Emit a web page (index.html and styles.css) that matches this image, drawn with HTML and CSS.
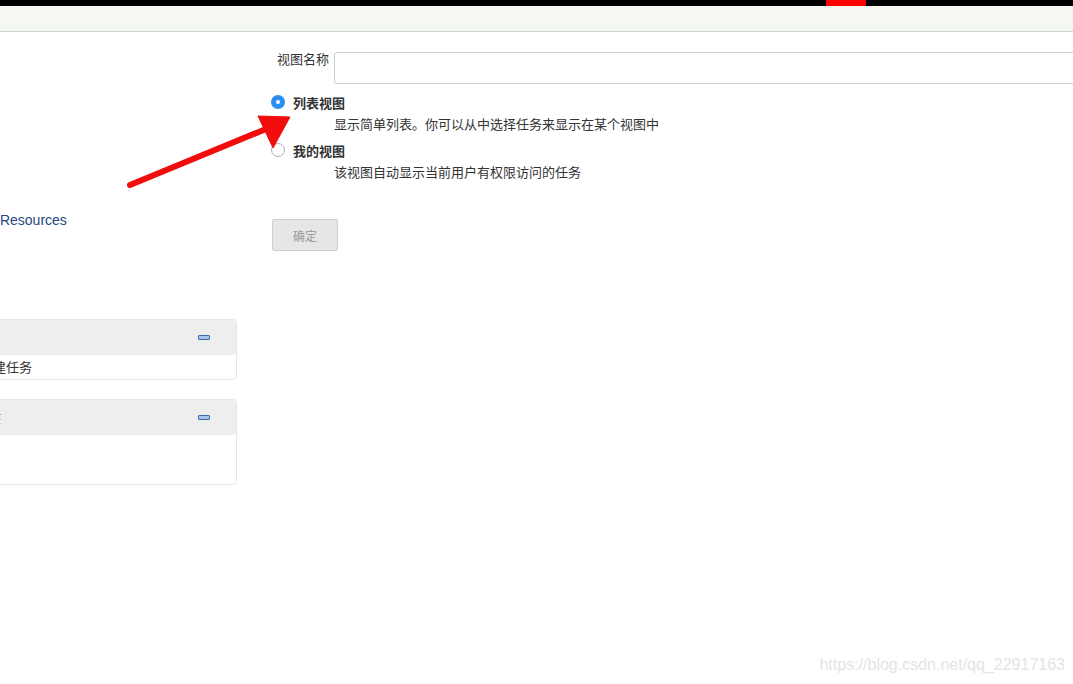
FILE: index.html
```html
<!DOCTYPE html>
<html lang="zh-CN">
<head>
<meta charset="utf-8">
<title>新建视图</title>
<link rel="stylesheet" href="styles.css">
</head>
<body>
<div class="topbar"><div class="topbar-red"></div></div>
<div class="subbar"></div>
<div class="layout">
  <aside class="side">
    <ul class="tasks">
      <li><a href="#">Lockable Resources</a></li>
    </ul>
    <div class="panel">
      <div class="panel-head"><span class="panel-title">构建队列</span><span class="minus"></span></div>
      <div class="panel-body"><div class="panel-row">队列中没有构建任务</div></div>
    </div>
    <div class="panel panel-exec">
      <div class="panel-head"><span class="panel-title">构建执行器状态</span><span class="minus"></span></div>
      <div class="panel-body"><div class="panel-row"></div><div class="panel-row"></div></div>
    </div>
  </aside>
  <main class="content">
    <form class="form">
      <div class="name-row">
        <label class="name-label">视图名称</label>
        <input class="name-input" type="text">
      </div>
      <div class="option">
        <div class="option-title"><span class="radio radio-on"></span><b>列表视图</b></div>
        <div class="option-desc">显示简单列表。你可以从中选择任务来显示在某个视图中</div>
      </div>
      <div class="option option-second">
        <div class="option-title"><span class="radio"></span><b>我的视图</b></div>
        <div class="option-desc">该视图自动显示当前用户有权限访问的任务</div>
      </div>
      <button class="ok" type="button">确定</button>
    </form>
  </main>
</div>
<svg class="arrow" width="300" height="200" viewBox="0 0 300 200">
  <line x1="130" y1="185" x2="266" y2="129" stroke="#f20d0d" stroke-width="6" stroke-linecap="round"/>
  <polygon points="258,116 290,117 273,148" fill="#f20d0d" stroke="#f20d0d" stroke-width="1" stroke-linejoin="round"/>
</svg>
<div class="watermark">https://blog.csdn.net/qq_22917163</div>
</body>
</html>
```
FILE: styles.css
```css
html, body {
  margin: 0;
  padding: 0;
  height: 100%;
  overflow: hidden;
  background: #fff;
}
body {
  position: relative;
  font-family: "Noto Sans CJK SC", "Liberation Sans", sans-serif;
  font-size: 13px;
  color: #333;
}
.topbar {
  height: 6px;
  background: #000;
  display: flex;
}
.topbar-red {
  margin-left: 826px;
  width: 40px;
  background: #ff0000;
}
.subbar {
  height: 25px;
  background: #f4f8f1;
  border-bottom: 1px solid #cfd3cd;
}
.layout {
  display: flex;
  align-items: flex-start;
}
.side {
  flex-shrink: 0;
  width: 400px;
  margin-left: -163px;
}
.tasks {
  list-style: none;
  margin: 0;
  padding: 176px 0 0 103px;
}
.tasks li {
  height: 24px;
  line-height: 24px;
}
.tasks a {
  font-family: "Liberation Sans", "Noto Sans CJK SC", sans-serif;
  font-size: 14px;
  color: #27477d;
  text-decoration: none;
  white-space: nowrap;
}
.panel {
  margin-top: 87px;
  border: 1px solid #e6e6e6;
  border-radius: 4px;
  overflow: hidden;
}
.panel-exec {
  margin-top: 19px;
}
.panel-head {
  height: 35px;
  background: #eeeeee;
  display: flex;
  align-items: center;
  justify-content: space-between;
  padding: 0 26px 0 77px;
}
.panel-exec .panel-head {
  padding-left: 72px;
}
.panel-title {
  font-size: 13px;
  white-space: nowrap;
}
.minus {
  width: 10px;
  height: 3px;
  background: #a9c3e8;
  border: 1px solid #3d66a6;
  border-radius: 1px;
}
.panel-body {
  background: #fff;
}
.panel-row {
  height: 24px;
  line-height: 24px;
  padding-left: 77px;
  white-space: nowrap;
}
.panel-exec .panel-body {
  padding-bottom: 1px;
}
.content {
  flex-shrink: 0;
  width: 900px;
  margin-left: 34px;
  padding-top: 20px;
}
.form {
  margin: 0;
}
.name-row {
  display: flex;
  align-items: flex-start;
}
.name-label {
  width: 58px;
  padding-right: 5px;
  text-align: right;
  line-height: 13px;
  color: #333;
}
.name-input {
  flex: 1;
  box-sizing: border-box;
  height: 32px;
  margin: 0;
  border: 1px solid #cccccc;
  border-radius: 3px;
  background: #fff;
  padding: 0 6px;
}
.option {
  margin-top: 7px;
}
.option-second {
  margin-top: 4px;
}
.option-title {
  display: flex;
  align-items: center;
  height: 22px;
}
.option-title b {
  font-weight: bold;
  color: #333;
}
.radio {
  box-sizing: border-box;
  width: 14px;
  height: 14px;
  border-radius: 50%;
  border: 1px solid #b0b0b0;
  background: #fff;
  margin-right: 8px;
  display: flex;
  align-items: center;
  justify-content: center;
}
.radio-on {
  border: none;
  background: #2b8ef0;
}
.radio-on::after {
  content: "";
  width: 4px;
  height: 4px;
  border-radius: 50%;
  background: #fff;
}
.option-desc {
  padding-left: 63px;
  line-height: 22px;
  color: #333;
}
.ok {
  display: block;
  margin: 36px 0 0 1px;
  width: 66px;
  height: 32px;
  background: #e6e6e6;
  border: 1px solid #cfcfcf;
  border-radius: 2px;
  color: #999;
  font-family: "Noto Sans CJK SC", sans-serif;
  font-size: 12px;
  padding: 0;
}
.arrow {
  position: absolute;
  left: 0;
  top: 0;
}
.watermark {
  position: absolute;
  right: 8px;
  top: 655px;
  font-family: "Liberation Sans", sans-serif;
  font-size: 16px;
  line-height: 20px;
  color: #e4e4e4;
}
```
